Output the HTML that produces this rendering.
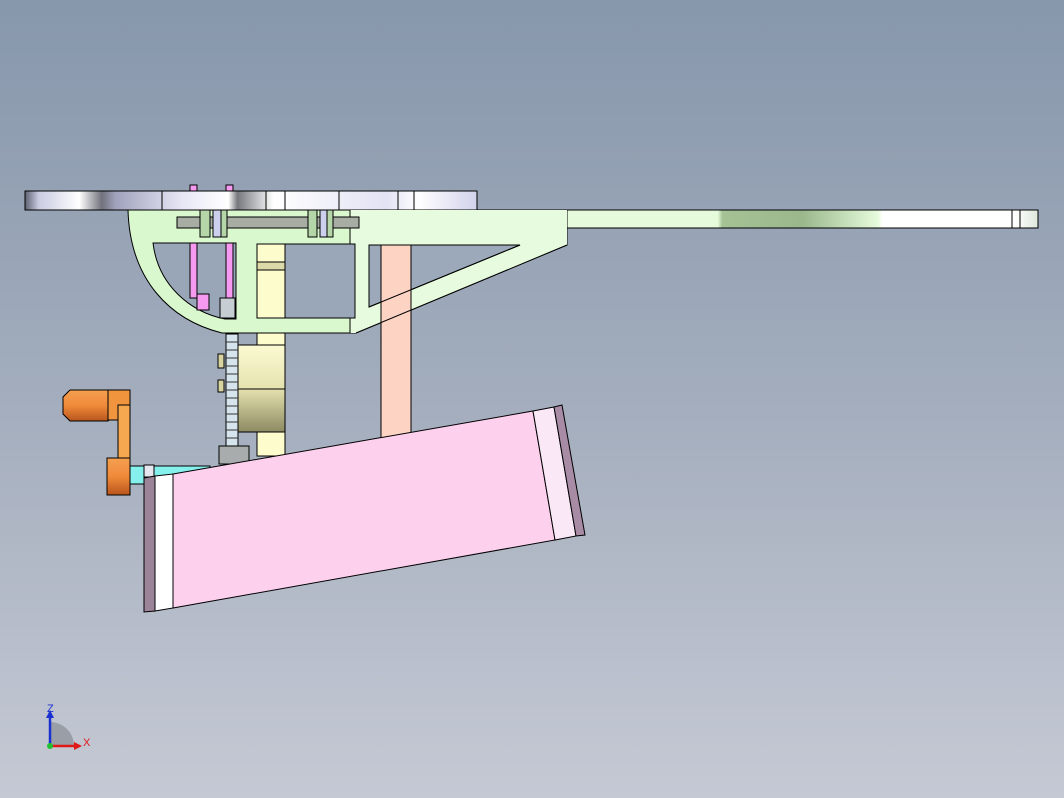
<!DOCTYPE html>
<html><head><meta charset="utf-8"><style>
html,body{margin:0;padding:0;width:1064px;height:798px;overflow:hidden}
body{background:linear-gradient(#8797ac 0%,#a3adbd 50%,#c5c9d4 100%)}
svg{position:absolute;left:0;top:0}
</style></head><body>
<svg width="1064" height="798" viewBox="0 0 1064 798">
<defs>
<linearGradient id="plate" x1="0" x2="1">
<stop offset="0" stop-color="#5d6070"/><stop offset=".03" stop-color="#c9cbe0"/><stop offset=".12" stop-color="#fff"/><stop offset=".17" stop-color="#70727c"/><stop offset=".2" stop-color="#a0a2bc"/><stop offset=".35" stop-color="#e8e8f6"/><stop offset=".45" stop-color="#fff"/><stop offset=".47" stop-color="#76787e"/><stop offset=".55" stop-color="#fff"/><stop offset=".8" stop-color="#e2e2f4"/><stop offset=".87" stop-color="#fff"/><stop offset="1" stop-color="#d2d2ec"/>
</linearGradient>
<linearGradient id="cyl" x1="0" y1="0" x2="0" y2="1">
<stop offset="0" stop-color="#fbfad2"/><stop offset=".5" stop-color="#e6e2b0"/><stop offset="1" stop-color="#8c8a62"/>
</linearGradient>
<linearGradient id="knob" x1="0" y1="0" x2="0" y2="1">
<stop offset="0" stop-color="#f4a050"/><stop offset=".5" stop-color="#f08a3a"/><stop offset="1" stop-color="#b8551c"/>
</linearGradient>
<linearGradient id="arm" x1="0" x2="1">
<stop offset="0" stop-color="#e6fbdc"/><stop offset=".32" stop-color="#e6fbdc"/><stop offset=".33" stop-color="#a4c294"/><stop offset=".5" stop-color="#9ab88c"/><stop offset=".66" stop-color="#e6fbdc"/><stop offset=".67" stop-color="#fff"/><stop offset=".95" stop-color="#fff"/><stop offset="1" stop-color="#dfe8dc"/>
</linearGradient>
</defs>
<g stroke="#000" stroke-width="1">
<!-- yellow column -->
<rect x="257" y="244" width="28" height="212" fill="#fdfccc"/>
<!-- pink rods -->
<rect x="190" y="185" width="7" height="125" fill="#f59af0"/>
<rect x="226" y="185" width="7" height="125" fill="#f59af0"/>
<!-- top plate -->
<rect x="25" y="191" width="452" height="19" fill="url(#plate)"/>
<line x1="162" y1="191" x2="162" y2="210"/><line x1="266" y1="191" x2="266" y2="210"/><line x1="285" y1="191" x2="285" y2="210"/><line x1="339" y1="191" x2="339" y2="210"/><line x1="398" y1="191" x2="398" y2="210"/><line x1="414" y1="191" x2="414" y2="210"/>
<!-- arm -->
<rect x="567" y="210" width="471" height="18" fill="url(#arm)"/>
<line x1="1012" y1="210" x2="1012" y2="228"/><line x1="1020" y1="210" x2="1020" y2="228"/>
<!-- frame -->
<path d="M128 210 L567 210 L567 245 L356 333 L222 333 C170 320 130 280 128 210 Z" fill="#daf8ce"/>
<path d="M350 210 L567 210 L567 245 L356 333 L350 333 Z" fill="#e7fcde" stroke="none"/>
<line x1="350" y1="210" x2="350" y2="333"/>
<path d="M153 243 L236 243 L236 319 L225 319 C190 312 158 285 153 243 Z" fill="#98a6b8"/>
<path d="M355 244 L355 318 L285 318 L285 244 Z" fill="#9aa7b9"/>
<path d="M369 245 L520 245 L369 307 Z" fill="#9ca9bb"/>
<rect x="257" y="244" width="28" height="74" fill="#fdfccc"/>
<rect x="257" y="262" width="28" height="8" fill="#dcdaa8"/>
<rect x="190" y="243" width="7" height="55" fill="#f59af0"/>
<rect x="226" y="243" width="7" height="60" fill="#f59af0"/>
<rect x="197" y="294" width="12" height="16" fill="#f59af0"/>
<rect x="220" y="298" width="15" height="20" fill="#c6ced4"/>
<!-- salmon bar in front -->
<rect x="381" y="245" width="30" height="200" fill="#fdd3c4"/>
<line x1="369" y1="307" x2="520" y2="245"/>
<line x1="567" y1="245" x2="356" y2="333"/>
<!-- shaft rod -->
<rect x="177" y="217" width="182" height="11" fill="#a8ada4"/>
<rect x="200" y="210" width="10" height="27" fill="#b4d6a8"/><rect x="213" y="210" width="8" height="27" fill="#cdd0ec"/><rect x="221" y="210" width="6" height="27" fill="#b4d6a8"/>
<rect x="308" y="210" width="9" height="27" fill="#b4d6a8"/><rect x="320" y="210" width="7" height="27" fill="#cdd0ec"/><rect x="327" y="210" width="6" height="27" fill="#b4d6a8"/>
<!-- gear + cylinder -->
<rect x="238" y="345" width="47" height="87" fill="url(#cyl)"/>
<line x1="238" y1="389" x2="285" y2="389"/>
<rect x="226" y="334" width="12" height="122" fill="#d6e4ee"/>
<path d="M226 342h12M226 350h12M226 358h12M226 366h12M226 374h12M226 382h12M226 390h12M226 398h12M226 406h12M226 414h12M226 422h12M226 430h12M226 438h12" stroke="#333"/>
<rect x="218" y="354" width="6" height="14" fill="#d8d4a0"/><rect x="218" y="380" width="6" height="12" fill="#d8d4a0"/>
<rect x="219" y="446" width="30" height="18" fill="#a8acac"/>
<!-- crank -->
<path d="M70 390 H108 L114 398 V414 L108 421 H70 L63 414 V397 Z" fill="url(#knob)"/>
<rect x="108" y="390" width="22" height="30" fill="#f0953e"/>
<rect x="118" y="405" width="12" height="75" fill="#f5a850"/>
<rect x="107" y="458" width="23" height="37" fill="url(#knob)"/>
<rect x="130" y="466" width="80" height="18" fill="#86f0ec"/>
<rect x="144" y="465" width="10" height="12" fill="#e6e6ee"/>
<!-- pink box -->
<polygon points="144,478 155,476 155,611 144,612" fill="#9c8498"/>
<polygon points="155,476 173,474 173,608 155,611" fill="#fff"/>
<polygon points="173,474 533,411 555,540 173,608" fill="#fdd0ee"/>
<polygon points="533,411 554,407 576,536 555,540" fill="#fae8f6"/>
<polygon points="554,407 562,405 585,535 576,536" fill="#a88ca6"/>
</g>
<!-- axis triad -->
<g>
<path d="M50 722 A24 24 0 0 1 74 746 L50 746 Z" fill="#9a9ea6"/>
<line x1="50" y1="746" x2="50" y2="716" stroke="#1a30d0" stroke-width="2.5"/>
<polygon points="46,718 50,710 54,718" fill="#1a30d0"/>
<line x1="50" y1="746" x2="76" y2="746" stroke="#e01818" stroke-width="2.5"/>
<polygon points="74,742 82,746 74,750" fill="#e01818"/>
<circle cx="50" cy="746" r="3" fill="#20c030"/>
<text x="47" y="712" font-family="Liberation Sans, sans-serif" font-size="11" fill="#1a30d0">Z</text>
<text x="83" y="746" font-family="Liberation Sans, sans-serif" font-size="11" fill="#e01818">X</text>
</g>
</svg>
</body></html>
